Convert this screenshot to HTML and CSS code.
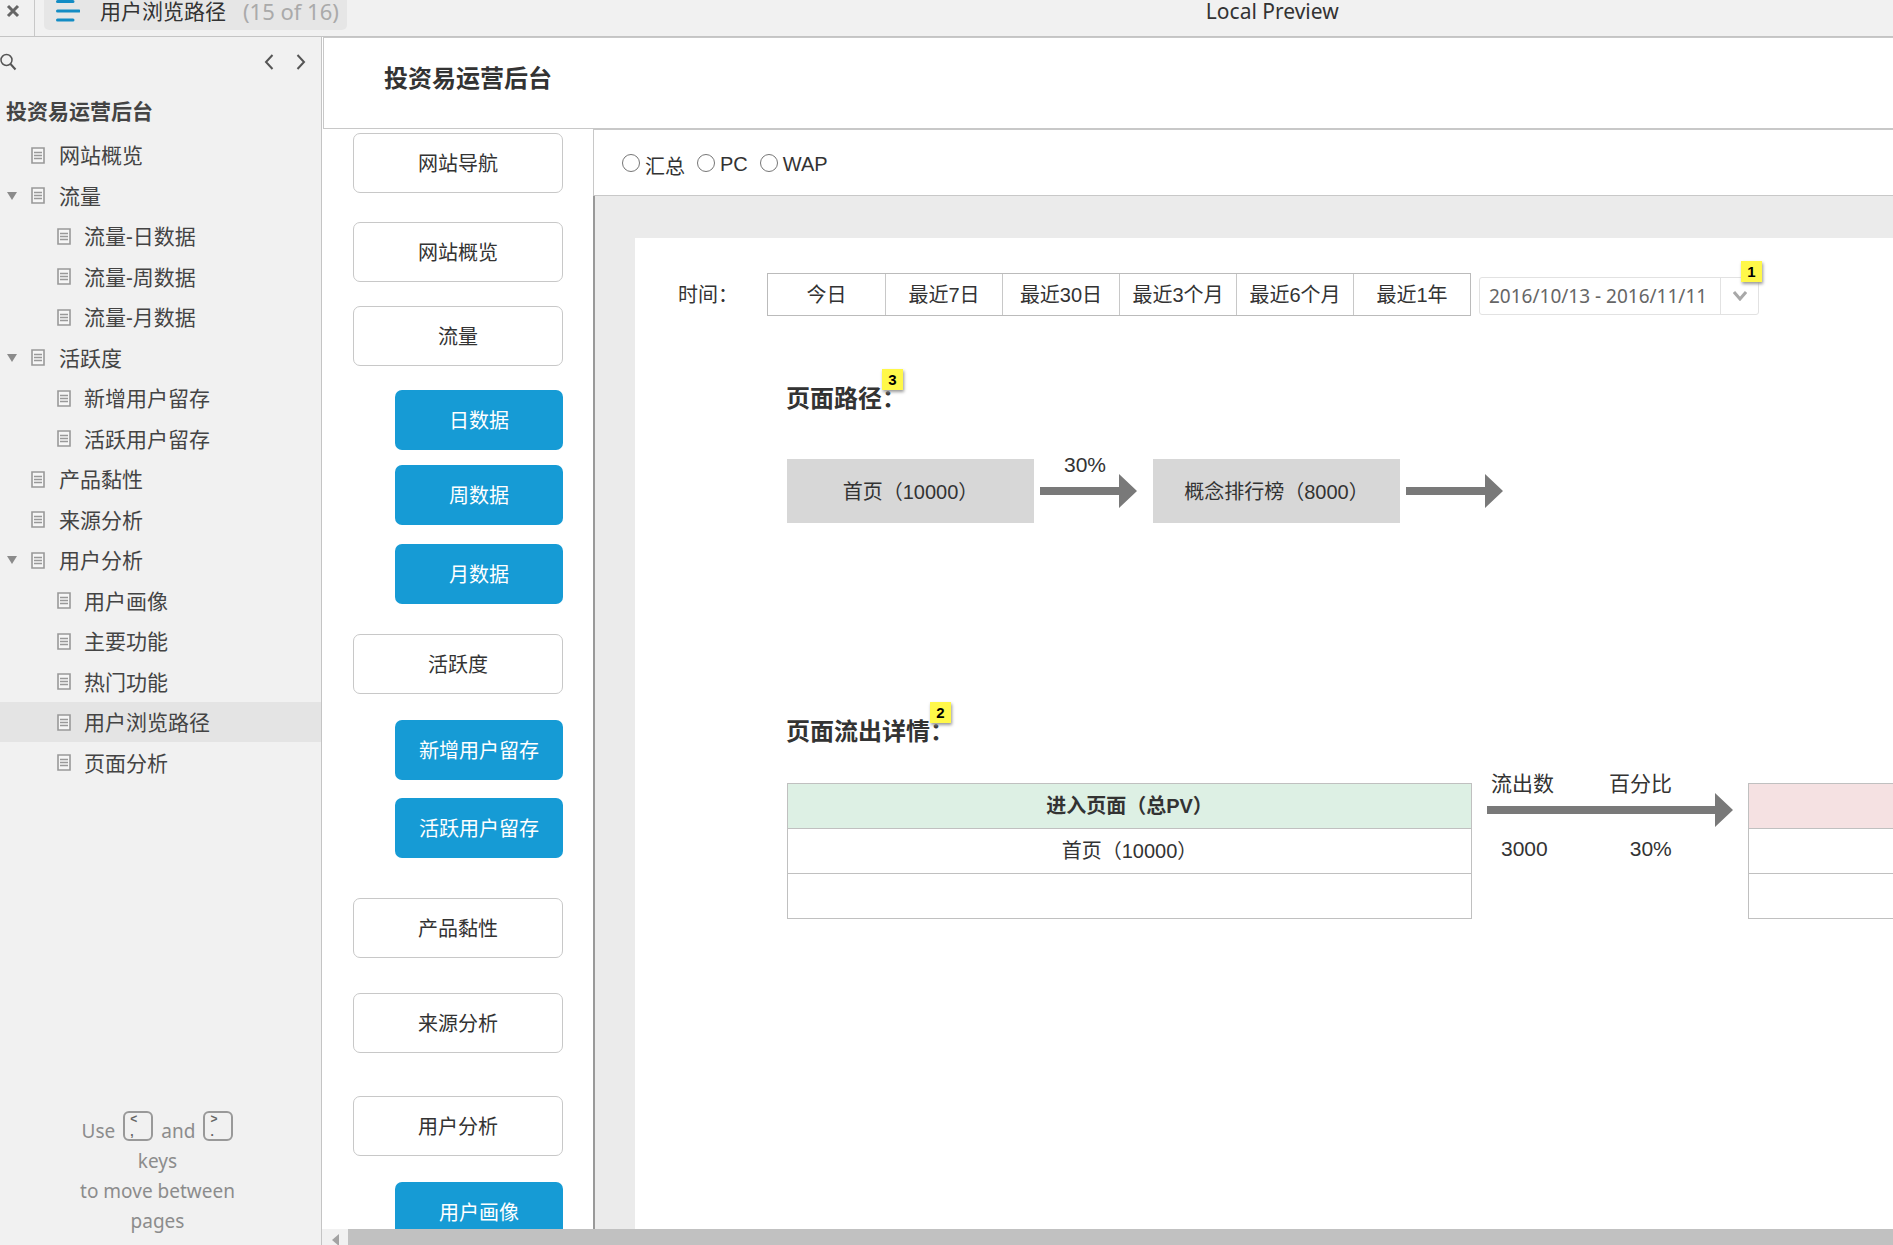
FILE: index.html
```html
<!DOCTYPE html>
<html lang="zh-CN">
<head>
<meta charset="utf-8">
<title>用户浏览路径</title>
<link rel="stylesheet" href="styles.css">
</head>
<body>
<svg class="defs" aria-hidden="true">
  <symbol id="page" viewBox="0 0 14 17"><path d="M1 1h12v15H1z" fill="#f6f6f6" stroke="#999" stroke-width="1.6"/><path d="M3 5.500h8M3 8.500h8M3 11.500h8" stroke="#999" stroke-width="1.300"/></symbol>
  <symbol id="tri" viewBox="0 0 10 8"><path d="M0 0h10L5 8z" fill="#8b8b8b"/></symbol>
</svg>
<header class="topbar">
  <button class="close" aria-label="关闭"><svg width="14" height="14" viewBox="0 0 14 14"><path d="M2 2l10 10M12 2L2 12" stroke="#666" stroke-width="3"/></svg></button>
  <button class="tab">
    <svg width="24" height="22" viewBox="0 0 24 22"><path d="M1.500 1.500H17M1.500 11H23M1.500 20H17" stroke="#138cc4" stroke-width="3" stroke-linecap="round"/></svg>
    <span class="tab-name">用户浏览路径</span><span class="tab-count">(15 of 16)</span>
  </button>
  <div class="preview">Local Preview</div>
</header>
<div class="main">
  <aside class="sidebar">
    <div class="tools">
      <button aria-label="搜索"><svg width="17" height="18" viewBox="0 0 17 18"><circle cx="6.500" cy="7" r="5.500" fill="none" stroke="#555" stroke-width="1.500"/><path d="M10.500 11l5 5.500" stroke="#555" stroke-width="2"/></svg></button>
      <span class="pager">
        <button aria-label="上一页"><svg width="10" height="16" viewBox="0 0 10 16"><path d="M8.500 1L2 8l6.500 7" fill="none" stroke="#555" stroke-width="2"/></svg></button>
        <button aria-label="下一页"><svg width="10" height="16" viewBox="0 0 10 16"><path d="M1.500 1L8 8l-6.500 7" fill="none" stroke="#555" stroke-width="2"/></svg></button>
      </span>
    </div>
    <h2 class="project">投资易运营后台</h2>
    <nav class="tree">
      <a href="#"><i></i><svg class="pg"><use href="#page"/></svg>网站概览</a>
      <a href="#"><i><svg class="tr"><use href="#tri"/></svg></i><svg class="pg"><use href="#page"/></svg>流量</a>
      <a href="#" class="sub"><svg class="pg"><use href="#page"/></svg>流量-日数据</a>
      <a href="#" class="sub"><svg class="pg"><use href="#page"/></svg>流量-周数据</a>
      <a href="#" class="sub"><svg class="pg"><use href="#page"/></svg>流量-月数据</a>
      <a href="#"><i><svg class="tr"><use href="#tri"/></svg></i><svg class="pg"><use href="#page"/></svg>活跃度</a>
      <a href="#" class="sub"><svg class="pg"><use href="#page"/></svg>新增用户留存</a>
      <a href="#" class="sub"><svg class="pg"><use href="#page"/></svg>活跃用户留存</a>
      <a href="#"><i></i><svg class="pg"><use href="#page"/></svg>产品黏性</a>
      <a href="#"><i></i><svg class="pg"><use href="#page"/></svg>来源分析</a>
      <a href="#"><i><svg class="tr"><use href="#tri"/></svg></i><svg class="pg"><use href="#page"/></svg>用户分析</a>
      <a href="#" class="sub"><svg class="pg"><use href="#page"/></svg>用户画像</a>
      <a href="#" class="sub"><svg class="pg"><use href="#page"/></svg>主要功能</a>
      <a href="#" class="sub"><svg class="pg"><use href="#page"/></svg>热门功能</a>
      <a href="#" class="sub current"><svg class="pg"><use href="#page"/></svg>用户浏览路径</a>
      <a href="#" class="sub"><svg class="pg"><use href="#page"/></svg>页面分析</a>
    </nav>
    <div class="hint">
      <div class="hint-row">Use <kbd><span>&lt;</span><span>,</span></kbd> and <kbd><span>&gt;</span><span>.</span></kbd></div>
      <div>keys</div><div>to move between</div><div>pages</div>
    </div>
  </aside>
  <div class="stage">
    <div class="site-head"><h1>投资易运营后台</h1></div>
    <div class="body">
      <nav class="menu">
        <button>网站导航</button>
        <button class="g28">网站概览</button>
        <button class="g24">流量</button>
        <button class="blue g24">日数据</button>
        <button class="blue g16">周数据</button>
        <button class="blue g19">月数据</button>
        <button class="g30">活跃度</button>
        <button class="blue g26">新增用户留存</button>
        <button class="blue g18">活跃用户留存</button>
        <button class="g40">产品黏性</button>
        <button class="g35">来源分析</button>
        <button class="g43">用户分析</button>
        <button class="blue g26">用户画像</button>
      </nav>
      <section class="content">
        <div class="platform">
          <label class="low"><input type="radio" name="p"><span>汇总</span></label>
          <label><input type="radio" name="p"><span>PC</span></label>
          <label><input type="radio" name="p"><span>WAP</span></label>
        </div>
        <div class="canvas">
          <div class="card">
            <div class="filter">
              <span class="filter-label">时间：</span>
              <div class="ranges"><button>今日</button><button>最近7日</button><button>最近30日</button><button>最近3个月</button><button>最近6个月</button><button>最近1年</button></div>
              <div class="date"><input type="text" aria-label="日期范围" value="2016/10/13 - 2016/11/11"><button aria-label="选择日期"><svg width="14" height="10" viewBox="0 0 14 10"><path d="M1 1l6 7 6-7" fill="none" stroke="#a8a8a8" stroke-width="3"/></svg></button><b class="note">1</b></div>
            </div>
            <div class="paths">
              <h3>页面路径：<b class="note">3</b></h3>
              <div class="flow">
                <div class="step">首页（10000）</div>
                <div class="link"><span>30%</span><svg width="97" height="34" viewBox="0 0 97 34"><path d="M0 13h79V0l18 17-18 17V21H0z" fill="#797979"/></svg></div>
                <div class="step">概念排行榜（8000）</div>
                <div class="link"><svg width="97" height="34" viewBox="0 0 97 34"><path d="M0 13h79V0l18 17-18 17V21H0z" fill="#797979"/></svg></div>
              </div>
            </div>
            <div class="outflow">
              <h3>页面流出详情：<b class="note">2</b></h3>
              <div class="detail">
                <table class="enter"><thead><tr><th>进入页面（总PV）</th></tr></thead><tbody><tr><td>首页（10000）</td></tr><tr><td></td></tr></tbody></table>
                <div class="rate">
                  <div class="rate-row"><span>流出数</span><span>百分比</span></div>
                  <svg width="246" height="34" viewBox="0 0 246 34"><path d="M0 13h228V0l18 17-18 17V21H0z" fill="#797979"/></svg>
                  <div class="rate-row nums"><span>3000</span><span>30%</span></div>
                </div>
                <table class="leave"><thead><tr><th></th></tr></thead><tbody><tr><td></td></tr><tr><td></td></tr></tbody></table>
              </div>
            </div>
          </div>
        </div>
      </section>
    </div>
    <div class="scroll"><svg width="7" height="12" viewBox="0 0 7 12"><path d="M7 0v12L0 6z" fill="#a3a3a3"/></svg><div class="thumb"></div></div>
  </div>
</div>
</body>
</html>
```
FILE: styles.css
```css
* { box-sizing: border-box; }
body {
  margin: 0;
  height: 100vh;
  display: flex;
  flex-direction: column;
  overflow: hidden;
  background: #fff;
  color: #333;
  font: 20px/30px "Liberation Sans", "Noto Sans CJK SC", sans-serif;
}
button {
  font: inherit;
  color: inherit;
  background: none;
  border: 0;
  padding: 0;
}
svg { display: block; flex: none; }
h1, h2, h3 { margin: 0; }
.defs { position: absolute; width: 0; height: 0; }

.topbar {
  flex: none;
  display: flex;
  height: 37px;
  background: #f1f1f1;
  border-bottom: 1px solid #c4c4c4;
  font-family: "Noto Sans", "Noto Sans CJK SC", sans-serif;
}
.close {
  width: 35px;
  padding: 2px 0 16px 6px;
  border-right: 1px solid #c8c8c8;
}
.tab {
  display: flex;
  align-items: center;
  height: 30px;
  margin-left: 9px;
  padding: 0 8px 8px 12px;
  border-radius: 0 0 5px 5px;
  background: #e6e6e6;
  font-size: 21px;
}
.tab-name { margin-left: 20px; }
.tab-count { margin-left: 17px; color: #aaa; font-size: 22px; }
.preview {
  flex: 1;
  padding-left: 859px;
  font-size: 21px;
  line-height: 22px;
}

.main { flex: 1; min-height: 0; display: flex; }

.sidebar {
  flex: none;
  width: 322px;
  display: flex;
  flex-direction: column;
  background: #f1f1f1;
  border-right: 1px solid #c4c4c4;
  color: #444;
  font-family: "Noto Sans", "Noto Sans CJK SC", sans-serif;
}
.tools {
  display: flex;
  justify-content: space-between;
  align-items: center;
  height: 50px;
  padding-right: 15px;
}
.pager { display: flex; gap: 22px; }
.project {
  padding: 9px 6px;
  font-size: 21px;
  line-height: 30px;
}
.tree a {
  display: flex;
  align-items: center;
  height: 40px;
  color: #444;
  font-size: 21px;
  text-decoration: none;
}
.tree a:nth-child(even) { height: 41px; }
.tree i { width: 31px; padding-left: 7px; }
.tree .sub { padding-left: 57px; }
.tree .current { background: #e4e4e4; }
.pg { width: 14px; height: 17px; margin-right: 14px; }
.sub .pg { margin-right: 13px; }
.tr { width: 10px; height: 8px; }
.hint {
  margin-top: auto;
  padding: 0 6px 9px 0;
  text-align: center;
  color: #8c8c8c;
  font-size: 19px;
}
.hint-row { display: flex; justify-content: center; align-items: flex-end; gap: 8px; }
kbd {
  display: flex;
  flex-direction: column;
  align-items: flex-start;
  width: 30px;
  height: 30px;
  margin-bottom: 5px;
  padding: 0 5px;
  border: 2px solid #999;
  border-radius: 6px;
  color: #666;
  font: 700 12px/13px "Liberation Sans", sans-serif;
}

.stage {
  flex: 1;
  min-width: 0;
  display: flex;
  flex-direction: column;
}
.site-head {
  flex: none;
  height: 92px;
  margin-left: 1px;
  padding: 25px 60px;
  border: solid #c8c8c8;
  border-width: 1px 0 1px 1px;
}
.site-head h1 { font-size: 24px; line-height: 32px; }
.body { flex: 1; min-height: 0; display: flex; overflow: hidden; }
.menu {
  flex: none;
  width: 271px;
  display: flex;
  flex-direction: column;
  align-items: flex-end;
  padding: 4px 30px 0 0;
}
.menu button {
  flex: none;
  width: 210px;
  height: 60px;
  padding-top: 2px;
  border: 1px solid #c8c8c8;
  border-radius: 7px;
}
.menu .blue { width: 168px; border: 0; background: #169bd5; color: #fff; }
.menu .g16 { margin-top: 15px; }
.menu .g18 { margin-top: 18px; }
.menu .g19 { margin-top: 19px; }
.menu .g24 { margin-top: 24px; }
.menu .g26 { margin-top: 26px; }
.menu .g28 { margin-top: 29px; }
.menu .g30 { margin-top: 30px; }
.menu .g35 { margin-top: 35px; }
.menu .g40 { margin-top: 40px; }
.menu .g43 { margin-top: 43px; }

.content { flex: 1; min-width: 0; display: flex; flex-direction: column; }
.platform {
  flex: none;
  display: flex;
  gap: 12px;
  height: 67px;
  padding: 18px 28px;
  border: solid #c8c8c8;
  border-width: 1px 0 1px 1px;
}
.platform label { display: flex; align-items: center; gap: 5px; height: 30px; }
.platform input { width: 18px; height: 18px; margin: 0; }
.platform span { padding-top: 2px; }
.platform .low span { padding-top: 8px; }
.canvas {
  flex: 1;
  padding: 42px 0 0 40px;
  background: #ebebeb;
  border-left: 2px solid #999;
}
.card { height: 100%; padding: 35px 0 0 43px; background: #fff; overflow: hidden; }
.filter { display: flex; align-items: center; height: 43px; }
.filter-label { width: 89px; }
.ranges {
  display: grid;
  grid-template-columns: repeat(6, 117px);
  flex: none;
  height: 43px;
  border: 1px solid #bbb;
}
.ranges button + button { border-left: 1px solid #c8c8c8; }
.date {
  position: relative;
  display: flex;
  width: 280px;
  height: 38px;
  margin: 2px 0 0 8px;
  border: 1px solid #e2e2e2;
  border-radius: 3px;
}
.date input {
  width: 241px;
  padding: 0 0 0 9px;
  border: 0;
  border-right: 1px solid #e2e2e2;
  background: none;
  color: #666;
  font: 19px/30px "Noto Sans", sans-serif;
}
.date button { flex: 1; display: flex; align-items: center; justify-content: center; }
.note {
  position: absolute;
  width: 21px;
  height: 21px;
  background: #fff849;
  box-shadow: 1px 2px 3px #999;
  color: #000;
  font-size: 15px;
  line-height: 21px;
  text-align: center;
}
.date .note { right: -4px; top: -17px; }

.paths { padding: 67px 0 0 108px; }
h3 { position: relative; width: max-content; font-size: 24px; line-height: 32px; }
h3 .note { right: 3px; top: -14px; }
.flow { display: flex; margin-top: 44px; padding-left: 1px; gap: 6px; height: 64px; }
.step {
  display: flex;
  align-items: center;
  justify-content: center;
  width: 247px;
  padding-top: 2px;
  background: #d7d7d7;
}
.link {
  display: flex;
  flex-direction: column;
  justify-content: flex-end;
  width: 107px;
  padding-bottom: 15px;
}
.link span { height: 20px; padding-left: 24px; font-size: 21px; line-height: 22px; }

.outflow { padding: 193px 0 0 108px; }
.detail { display: flex; margin-top: 35px; padding-left: 1px; }
table {
  flex: none;
  border-collapse: collapse;
  align-self: flex-start;
}
th, td { height: 45px; padding: 0; border: 1px solid #c0c0c0; text-align: center; }
.enter { width: 685px; }
.enter th { background: #ddf0e4; }
.leave { width: 685px; }
.leave th { background: #f5e1e2; }
.rate { flex: none; width: 276px; padding-left: 15px; font-size: 21px; line-height: 24px; }
.rate-row { display: flex; gap: 55px; padding-left: 4px; height: 18px; align-items: center; margin-top: -8px; }
.rate .nums { margin-top: 13px; padding-left: 14px; gap: 82px; }

.scroll {
  flex: none;
  display: flex;
  align-items: center;
  gap: 9px;
  height: 16px;
  padding-left: 10px;
  background: #f1f1f1;
}
.scroll svg { margin-top: 6px; }
.thumb { flex: 1; height: 16px; background: #c1c1c1; }
```
